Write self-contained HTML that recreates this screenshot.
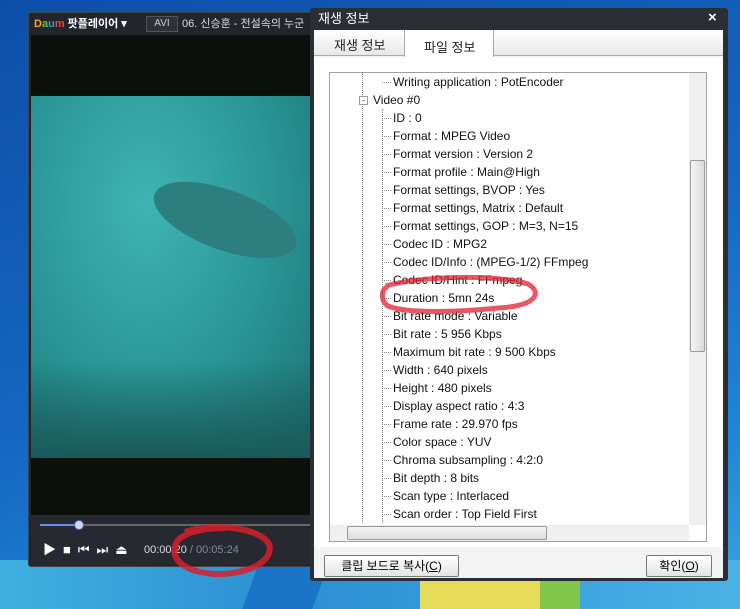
<!DOCTYPE html>
<html><head><meta charset="utf-8"><style>
*{margin:0;padding:0;box-sizing:border-box}
body{width:740px;height:609px;overflow:hidden;position:relative;font-family:"Liberation Sans","Noto Sans CJK KR",sans-serif;background:linear-gradient(160deg,#0d4fa8 0%,#1566c2 50%,#1f86d6 80%,#3aa6e0 100%)}
.abs{position:absolute}
.row{position:absolute;left:393px;font-size:12px;color:#111;height:18px;line-height:18px;white-space:nowrap}
.row:before{content:"";position:absolute;left:-11px;top:9px;width:9px;border-top:1px dotted #888}
</style></head><body>
<div class="abs" style="left:0;top:560px;width:740px;height:49px;background:linear-gradient(90deg,#3fb0e0,#2b8fd2 40%,#4bb2e6)"></div>
<div class="abs" style="left:250px;top:566px;width:70px;height:43px;background:#1a74c8;transform:skewX(-20deg)"></div>
<div class="abs" style="left:420px;top:575px;width:120px;height:34px;background:#e7dc5a"></div>
<div class="abs" style="left:540px;top:575px;width:40px;height:34px;background:#7fc64a"></div>
<div class="abs" style="left:28px;top:12px;width:290px;height:555px;background:#22262c;border:1px solid #444;border-radius:3px"></div>
<div class="abs" style="left:34px;top:16px;font-size:11px;font-weight:bold;color:#fff;line-height:16px"><span style="color:#f5a623">D</span><span style="color:#5bc24a">a</span><span style="color:#3b8fe0">u</span><span style="color:#e84a3a">m</span> 팟플레이어 ▾</div>
<div class="abs" style="left:146px;top:16px;width:32px;height:16px;border:1px solid #555;background:#2d3138;color:#ccc;font-size:10px;text-align:center;line-height:14px">AVI</div>
<div class="abs" style="left:182px;top:16px;font-size:11px;color:#ddd;line-height:16px;white-space:nowrap;width:130px;overflow:hidden">06. 신승훈 - 전설속의 누군</div>
<div class="abs" style="left:31px;top:35px;width:287px;height:480px;background:#0c100c"></div>
<div class="abs" style="left:31px;top:96px;width:287px;height:362px;background:radial-gradient(ellipse at 40% 30%,#3fb3b3,#2a9797 50%,#1c6e70 100%)"></div>
<div class="abs" style="left:31px;top:360px;width:287px;height:98px;background:linear-gradient(180deg,rgba(20,80,80,0),#1a5a5a)"></div>
<div class="abs" style="left:150px;top:190px;width:150px;height:60px;background:#2d7f7f;border-radius:50%;transform:rotate(20deg)"></div>
<div class="abs" style="left:31px;top:515px;width:287px;height:50px;background:#262a30"></div>
<div class="abs" style="left:40px;top:524px;width:278px;height:2px;background:#666"></div>
<div class="abs" style="left:40px;top:524px;width:40px;height:2px;background:#6c8cf0"></div>
<div class="abs" style="left:74px;top:520px;width:10px;height:10px;border-radius:50%;background:#cfd8f0;border:1px solid #4a6ac8"></div>
<div class="abs" style="left:43px;top:542px;font-size:13px;color:#fff;letter-spacing:7px;line-height:16px">▶■⏮⏭⏏</div>
<div class="abs" style="left:144px;top:542px;font-size:11px;color:#ddd;line-height:16px">00:00:20 <span style="color:#889">/ 00:05:24</span></div>
<svg class="abs" style="left:165px;top:520px" width="115" height="60"><path d="M20 12 C50 2,95 8,104 24 C110 42,80 55,50 54 C20 52,6 40,10 26 C12 16,30 8,60 8" fill="none" stroke="#d81e2a" stroke-width="6" opacity=".85"/></svg>
<div class="abs" style="left:310px;top:8px;width:418px;height:573px;background:#2a2e35;border-radius:3px"></div>
<div class="abs" style="left:318px;top:10px;font-size:13px;color:#fff;line-height:18px">재생 정보</div>
<div class="abs" style="left:708px;top:9px;font-size:15px;color:#fff;font-weight:bold">×</div>
<div class="abs" style="left:314px;top:30px;width:409px;height:548px;background:#f3f3f3"></div>
<div class="abs" style="left:314px;top:30px;width:409px;height:26px;background:linear-gradient(#fff,#e8e8e8);border-bottom:1px solid #aaa"></div>
<div class="abs" style="left:404px;top:30px;width:90px;height:27px;background:#fff;border-left:1px solid #aaa;border-right:1px solid #aaa"></div>
<div class="abs" style="left:334px;top:35px;font-size:13px;color:#222">재생 정보</div>
<div class="abs" style="left:424px;top:37px;font-size:13px;color:#222">파일 정보</div>
<div class="abs" style="left:314px;top:57px;width:409px;height:490px;background:#fff"></div>
<div class="abs" style="left:329px;top:72px;width:378px;height:470px;border:1px solid #a0a0a0;background:#fff;overflow:hidden">
 <div class="abs" style="left:32px;top:0;height:450px;border-left:1px dotted #888"></div>
 <div class="abs" style="left:52px;top:36px;height:414px;border-left:1px dotted #888"></div>
</div>
<div class="abs" style="left:359px;top:96px;width:9px;height:9px;border:1px solid #999;background:#fff;font-size:9px;line-height:6px;text-align:center;color:#333">-</div>
<div class="row" style="top:73px">Writing application : PotEncoder</div>
<div class="abs" style="left:373px;top:91px;font-size:12px;line-height:18px;color:#111">Video #0</div>
<div class="row" style="top:109px">ID : 0</div>
<div class="row" style="top:127px">Format : MPEG Video</div>
<div class="row" style="top:145px">Format version : Version 2</div>
<div class="row" style="top:163px">Format profile : Main@High</div>
<div class="row" style="top:181px">Format settings, BVOP : Yes</div>
<div class="row" style="top:199px">Format settings, Matrix : Default</div>
<div class="row" style="top:217px">Format settings, GOP : M=3, N=15</div>
<div class="row" style="top:235px">Codec ID : MPG2</div>
<div class="row" style="top:253px">Codec ID/Info : (MPEG-1/2) FFmpeg</div>
<div class="row" style="top:271px">Codec ID/Hint : FFmpeg</div>
<div class="row" style="top:289px">Duration : 5mn 24s</div>
<div class="row" style="top:307px">Bit rate mode : Variable</div>
<div class="row" style="top:325px">Bit rate : 5 956 Kbps</div>
<div class="row" style="top:343px">Maximum bit rate : 9 500 Kbps</div>
<div class="row" style="top:361px">Width : 640 pixels</div>
<div class="row" style="top:379px">Height : 480 pixels</div>
<div class="row" style="top:397px">Display aspect ratio : 4:3</div>
<div class="row" style="top:415px">Frame rate : 29.970 fps</div>
<div class="row" style="top:433px">Color space : YUV</div>
<div class="row" style="top:451px">Chroma subsampling : 4:2:0</div>
<div class="row" style="top:469px">Bit depth : 8 bits</div>
<div class="row" style="top:487px">Scan type : Interlaced</div>
<div class="row" style="top:505px">Scan order : Top Field First</div>
<svg class="abs" style="left:378px;top:270px" width="170" height="50"><path d="M8 16 C40 6,120 4,150 14 C164 22,160 36,120 38 C80 42,30 44,10 36 C2 30,3 20,10 16" fill="none" stroke="#e02030" stroke-width="5" opacity=".75"/></svg>
<div class="abs" style="left:689px;top:73px;width:17px;height:452px;background:#f0f0f0"></div>
<div class="abs" style="left:690px;top:160px;width:15px;height:192px;background:linear-gradient(90deg,#f4f4f4,#dcdcdc);border:1px solid #999;border-radius:2px"></div>
<div class="abs" style="left:330px;top:525px;width:359px;height:16px;background:#f0f0f0"></div>
<div class="abs" style="left:347px;top:526px;width:200px;height:14px;background:linear-gradient(#f4f4f4,#dcdcdc);border:1px solid #999;border-radius:2px"></div>
<div class="abs" style="left:324px;top:555px;width:135px;height:22px;border:1px solid #777;background:linear-gradient(#fff,#e4e4e4);border-radius:2px;font-size:12px;text-align:center;line-height:20px">클립 보드로 복사(<u>C</u>)</div>
<div class="abs" style="left:646px;top:555px;width:66px;height:22px;border:1px solid #777;background:linear-gradient(#fff,#e4e4e4);border-radius:2px;font-size:12px;text-align:center;line-height:20px">확인(<u>O</u>)</div>
</body></html>
